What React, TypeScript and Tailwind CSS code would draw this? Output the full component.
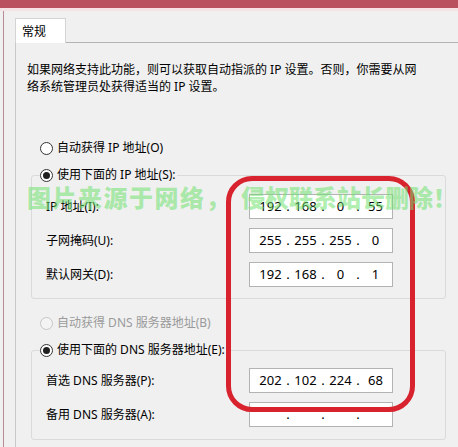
import * as React from 'react';

const uiFont = { fontFamily: '"Noto Sans", "Noto Sans CJK SC", sans-serif' };

function Radio({ checked = false, disabled = false }: { checked?: boolean; disabled?: boolean }) {
  return (
    <span
      className={
        'flex h-[13px] w-[13px] shrink-0 items-center justify-center rounded-full border ' +
        (disabled ? 'border-[#c6c6c6] bg-[#f4f4f4]' : 'border-[#333333] bg-white')
      }
    >
      {checked && <span className="h-[7px] w-[7px] rounded-full bg-[#1f1f1f]" />}
    </span>
  );
}

function RadioRow({
  label,
  checked,
  disabled,
}: {
  label: string;
  checked?: boolean;
  disabled?: boolean;
}) {
  return (
    <div className={'flex h-[18px] items-center gap-[4px] ' + (disabled ? 'text-[#9a9a9a]' : 'text-black')}>
      <Radio checked={checked} disabled={disabled} />
      <span className="leading-[18px]">{label}</span>
    </div>
  );
}

function IpBox({ octets }: { octets: string[] }) {
  return (
    <div className="flex h-[25px] w-[144px] items-center border border-[#b3b3b3] bg-white pl-[7px] text-[13px] text-black">
      {[0, 1, 2, 3].map((i) => (
        <React.Fragment key={i}>
          {i > 0 && <span className="w-[8px] text-center">.</span>}
          <span className="w-[27px] text-center">{octets[i] ?? ''}</span>
        </React.Fragment>
      ))}
    </div>
  );
}

function FieldRow({ label, octets }: { label: string; octets: string[] }) {
  return (
    <div className="flex h-[25px] items-center justify-between pl-[6px]">
      <span>{label}</span>
      <IpBox octets={octets} />
    </div>
  );
}

export default function App() {
  return (
    <div
      className="relative h-[447px] w-[458px] overflow-hidden bg-[#f0f0f0] text-[12px] text-black"
      style={uiFont}
    >
      {/* window caption strip */}
      <div className="h-[8px] bg-[#b9515f]" />
      <div className="h-[3px] bg-[#f6e3e5]" />

      <div className="flex">
        {/* window frame left edge */}
        <div className="ml-[3px] h-[440px] w-[1px] bg-[#b98d95]" />

        <div className="flex-1 pl-[11px] pt-[7px]">
          {/* tab strip */}
          <div className="flex h-[25px]">
            <div className="w-[51px] border-l border-r border-t border-[#d4d4d4] bg-white pl-[6px] pt-[4px]">
              常规
            </div>
            <div className="flex-1 border-b border-[#b4b4b4]" />
          </div>

          {/* tab panel */}
          <div className="h-[420px] border-l border-[#c9c9c9] pl-[11px] pt-[18px]">
            <p className="leading-[17px]">
              如果网络支持此功能，则可以获取自动指派的 IP 设置。否则，你需要从网
              <br />
              络系统管理员处获得适当的 IP 设置。
            </p>

            <div className="ml-[13px] mt-[44px]">
              <RadioRow label="自动获得 IP 地址(O)" />
            </div>

            <fieldset className="ml-[4px] mt-[9px] w-[415px] rounded-[3px] border border-[#dadada] px-[8px] pb-[11px] pt-[10px]">
              <legend className="pr-[1px]">
                <RadioRow label="使用下面的 IP 地址(S):" checked />
              </legend>
              <div className="flex flex-col gap-[9px] pr-[44px]">
                <FieldRow label="IP 地址(I):" octets={['192', '168', '0', '55']} />
                <FieldRow label="子网掩码(U):" octets={['255', '255', '255', '0']} />
                <FieldRow label="默认网关(D):" octets={['192', '168', '0', '1']} />
              </div>
            </fieldset>

            <div className="ml-[13px] mt-[15px]">
              <RadioRow label="自动获得 DNS 服务器地址(B)" disabled />
            </div>

            <fieldset className="ml-[4px] mt-[9px] w-[415px] rounded-[3px] border border-[#dadada] px-[8px] pb-[12px] pt-[9px]">
              <legend className="pr-[1px]">
                <RadioRow label="使用下面的 DNS 服务器地址(E):" checked />
              </legend>
              <div className="flex flex-col gap-[9px] pr-[44px]">
                <FieldRow label="首选 DNS 服务器(P):" octets={['202', '102', '224', '68']} />
                <FieldRow label="备用 DNS 服务器(A):" octets={[]} />
              </div>
            </fieldset>
          </div>
        </div>
      </div>

      {/* red annotation frame */}
      <div className="pointer-events-none absolute left-[226px] top-[176px] h-[236px] w-[189px] rounded-[26px] border-[5px] border-[#d8222e]" />

      {/* watermark */}
      <div
        className="pointer-events-none absolute left-[27px] top-[182px] flex whitespace-nowrap text-[24px] font-black leading-[30px] text-[rgba(110,225,110,0.55)]"
        style={{ fontFamily: '"Noto Sans CJK SC", sans-serif' }}
      >
        <span className="tracking-[1.5px]">图片来源于网络，</span>
        <span className="ml-[10px]">侵权联系站长删除！</span>
      </div>
    </div>
  );
}
